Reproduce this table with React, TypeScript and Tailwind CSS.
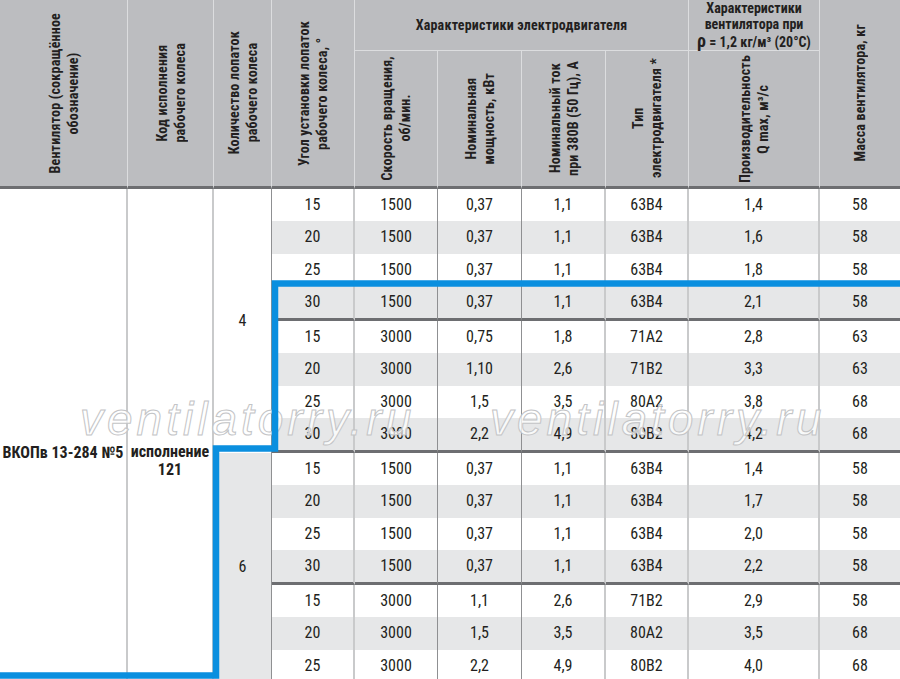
import React from "react"

const rows = [
  ["15", "1500", "0,37", "1,1", "63В4", "1,4", "58"],
  ["20", "1500", "0,37", "1,1", "63В4", "1,6", "58"],
  ["25", "1500", "0,37", "1,1", "63В4", "1,8", "58"],
  ["30", "1500", "0,37", "1,1", "63В4", "2,1", "58"],
  ["15", "3000", "0,75", "1,8", "71А2", "2,8", "63"],
  ["20", "3000", "1,10", "2,6", "71В2", "3,3", "63"],
  ["25", "3000", "1,5", "3,5", "80А2", "3,8", "68"],
  ["30", "3000", "2,2", "4,9", "80В2", "4,2", "68"],
  ["15", "1500", "0,37", "1,1", "63В4", "1,4", "58"],
  ["20", "1500", "0,37", "1,1", "63В4", "1,7", "58"],
  ["25", "1500", "0,37", "1,1", "63В4", "2,0", "58"],
  ["30", "1500", "0,37", "1,1", "63В4", "2,2", "58"],
  ["15", "3000", "1,1", "2,6", "71В2", "2,9", "58"],
  ["20", "3000", "1,5", "3,5", "80А2", "3,5", "68"],
  ["25", "3000", "2,2", "4,9", "80В2", "4,0", "68"],
]

// right-hand line of each data column (angle ... mass)
const colLines = [
  "border-r-2 border-r-[#c9cacb]",
  "border-r border-r-[#8f9092]",
  "border-r border-r-[#8f9092]",
  "border-r-2 border-r-[#c9cacb]",
  "border-r-2 border-r-[#c9cacb]",
  "border-r-2 border-r-[#c9cacb]",
  "",
]

function VText({ lines }: { lines: string[] }) {
  return (
    <span className="[writing-mode:vertical-rl] rotate-180 text-center whitespace-nowrap font-bold text-[14px] leading-[18px] tracking-[0.2px]">
      {lines.map((l, i) => (
        <React.Fragment key={i}>
          {l}
          {i < lines.length - 1 && <br />}
        </React.Fragment>
      ))}
    </span>
  )
}

const hCell = "flex items-center justify-center bg-[#bcbdc0] border-r border-r-[#dcdddf]"
const hBottom = "border-b-[3px] border-b-[#6d6e71]"

export default function App() {
  return (
    <div className="relative w-[900px] h-[679px] overflow-hidden bg-white text-[#231f20] font-['Roboto',sans-serif] [font-stretch:condensed]">
      <div className="grid grid-cols-[128px_86px_58px_83px_83px_84px_84px_83px_131px_80px]">
        {/* header */}
        <div className={`${hCell} ${hBottom} row-span-2`}>
          <VText lines={["Вентилятор (сокращённое", "обозначение)"]} />
        </div>
        <div className={`${hCell} ${hBottom} row-span-2`}>
          <VText lines={["Код исполнения", "рабочего колеса"]} />
        </div>
        <div className={`${hCell} ${hBottom} row-span-2`}>
          <VText lines={["Количество лопаток", "рабочего колеса"]} />
        </div>
        <div className={`${hCell} ${hBottom} row-span-2`}>
          <VText lines={["Угол установки лопаток", "рабочего колеса, °"]} />
        </div>
        <div className={`${hCell} col-span-4 h-[51px] border-b border-b-[#dcdddf] font-bold text-[14px] tracking-[0.2px]`}>
          Характеристики электродвигателя
        </div>
        <div className={`${hCell} h-[51px] border-b border-b-[#dcdddf] font-bold text-[14px] leading-[16.5px] text-center`}>
          <span>
            Характеристики
            <br />
            вентилятора при
            <br />
            <span className="text-[18px]">ρ</span> = 1,2 кг/м³ (20°С)
          </span>
        </div>
        <div className={`${hCell} ${hBottom} row-span-2 border-r-0`}>
          <VText lines={["Масса вентилятора, кг"]} />
        </div>
        <div className={`${hCell} ${hBottom} h-[138px]`}>
          <VText lines={["Скорость вращения,", "об/мин."]} />
        </div>
        <div className={`${hCell} ${hBottom} h-[138px]`}>
          <VText lines={["Номинальная", "мощность, кВт"]} />
        </div>
        <div className={`${hCell} ${hBottom} h-[138px]`}>
          <VText lines={["Номинальный ток", "при 380В (50 Гц), А"]} />
        </div>
        <div className={`${hCell} ${hBottom} h-[138px]`}>
          <VText lines={["Тип", "электродвигателя *"]} />
        </div>
        <div className={`${hCell} ${hBottom} h-[138px]`}>
          <VText lines={["Производительность", "Q max, м³/с"]} />
        </div>

        {/* body */}
        <div className="col-start-1 row-start-3 row-span-15 flex items-center justify-center pt-[36px] border-r-2 border-r-[#c9cacb] font-bold text-[16px] whitespace-nowrap">
          ВКОПв 13-284 №5
        </div>
        <div className="col-start-2 row-start-3 row-span-15 flex items-center justify-center pt-[52px] border-r-2 border-r-[#c9cacb] font-bold text-[16px] leading-[18px] text-center">
          <span>
            исполнение
            <br />
            121
          </span>
        </div>
        <div className="col-start-3 row-start-3 row-span-8 flex items-center justify-center border-r border-r-[#8f9092] text-[16px]">
          4
        </div>
        <div className="col-start-3 row-start-11 row-span-7 flex items-center justify-center bg-[#e6e7e8] border-r border-r-[#8f9092] text-[16px]">
          6
        </div>
        {rows.map((r, i) => {
          const last = i % 4 === 3
          const bg = i % 2 === 1 ? "bg-[#e6e7e8]" : "bg-white"
          return r.map((v, j) => (
            <div
              key={`${i}-${j}`}
              className={`flex items-center justify-center text-[16px] ${bg} ${colLines[j]} ${
                last ? "h-[35.25px] border-b-[3px] border-b-[#6d6e71]" : "h-[32.25px]"
              }`}
            >
              {v}
            </div>
          ))
        })}
      </div>

      {/* watermark */}
      <span className="absolute left-[80px] top-[396px] text-[46px] leading-none italic tracking-[4px] font-['Liberation_Sans',sans-serif] [font-stretch:normal] text-white/75 [-webkit-text-stroke:1px_#c3c4c6] pointer-events-none">
        ventilatorry.ru
      </span>
      <span className="absolute left-[490px] top-[396px] text-[46px] leading-none italic tracking-[4px] font-['Liberation_Sans',sans-serif] [font-stretch:normal] text-white/75 [-webkit-text-stroke:1px_#c3c4c6] pointer-events-none">
        ventilatorry.ru
      </span>

      {/* blue outline */}
      <svg className="absolute inset-0 pointer-events-none" width="900" height="679" viewBox="0 0 900 679">
        <polyline
          points="0,675.5 216,675.5 216,448.5 275,448.5 275,283.5 900,283.5"
          fill="none"
          stroke="#0a8fdf"
          strokeWidth="6.5"
          strokeLinejoin="miter"
        />
      </svg>
    </div>
  )
}
